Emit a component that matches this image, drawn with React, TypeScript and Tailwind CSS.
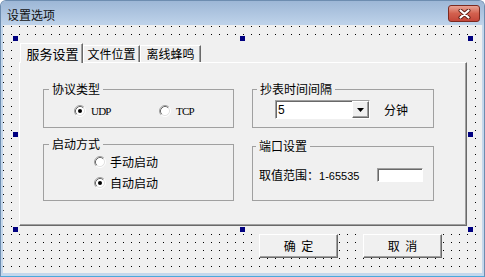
import type { ReactNode } from "react";

const Radio = ({ checked }: { checked?: boolean }) => (
  <svg width="12" height="12" viewBox="0 0 12 12" className="shrink-0">
    <circle cx="6" cy="6" r="4.5" fill="#fff" />
    <path d="M2.11 9.89A5.5 5.5 0 0 1 9.89 2.11" fill="none" stroke="#a0a0a0" />
    <path d="M9.89 2.11A5.5 5.5 0 0 1 2.11 9.89" fill="none" stroke="#fff" />
    <path d="M2.82 9.18A4.5 4.5 0 0 1 9.18 2.82" fill="none" stroke="#696969" />
    <path d="M9.18 2.82A4.5 4.5 0 0 1 2.82 9.18" fill="none" stroke="#e3e3e3" />
    {checked && <circle cx="6" cy="6" r="2" fill="#000" />}
  </svg>
);

const Frame = ({
  title,
  indent,
  className,
  children,
}: {
  title: string;
  indent: string;
  className: string;
  children: ReactNode;
}) => (
  <fieldset className={`border border-[#a0a0a0] p-0 ${className}`}>
    <legend className={`${indent} px-[3px] text-[12px] leading-[12px]`}>{title}</legend>
    {children}
  </fieldset>
);

const handles = [
  "left-[-5px] top-[-5px]",
  "left-[222px] top-[-5px]",
  "left-[450px] top-[-5px]",
  "left-[-5px] top-[91px]",
  "left-[450px] top-[91px]",
  "left-[-5px] top-[186px]",
  "left-[222px] top-[186px]",
  "left-[450px] top-[186px]",
];

const raised =
  "bg-[#f0f0f0] border border-t-white border-l-white border-r-[#696969] border-b-[#696969] shadow-[inset_-1px_-1px_0_#a0a0a0]";
const sunken =
  "bg-white border border-t-[#a0a0a0] border-l-[#a0a0a0] border-r-white border-b-white shadow-[inset_1px_1px_0_#696969]";

export default function App() {
  return (
    <div className="w-[485px] h-[277px] font-['Noto_Sans_CJK_SC',sans-serif] text-black select-none">
      <div className="flex h-full flex-col rounded-t-[6px] border border-[#6d8db0] border-b-[#4aa8dc] bg-[#c4d7ec] px-[2px] pb-[3px]">
        {/* title bar */}
        <div className="-mx-[2px] flex h-[24px] items-start justify-between rounded-t-[5px] bg-gradient-to-b from-[#9db7d6] to-[#bfd3ea] pl-[6px] pr-[4px]">
          <span className="mt-[8px] text-[12px] leading-[12px] text-[#111]">设置选项</span>
          <div className="mt-[4px] flex h-[17px] w-[32px] items-center justify-center rounded-[3px] border border-[#7c2a20] bg-gradient-to-b from-[#e8a395] via-[#d2604e] to-[#c4473a]">
            <svg width="13" height="10" viewBox="0 0 13 10">
              <path d="M2.5 1.5l8 7M10.5 1.5l-8 7" stroke="#5a1c14" strokeWidth="4" strokeLinecap="round" />
              <path d="M2.5 1.5l8 7M10.5 1.5l-8 7" stroke="#fff" strokeWidth="2.2" strokeLinecap="round" />
            </svg>
          </div>
        </div>

        {/* client area with design grid */}
        <div className="flex-1 bg-[#f0f0f0] bg-[conic-gradient(from_270deg_at_1px_1px,#000_25%,transparent_0)] bg-[length:8px_8px] bg-[position:0_1px] pl-[15px] pt-[16px]">
          <div className="relative h-[186px] w-[450px] bg-[#f0f0f0]">
            {/* tabs */}
            <div className="flex h-[21px] items-end pl-[2px]">
              <div className="relative z-10 -mb-px flex h-[20px] w-[63px] items-center justify-center border-l border-t border-r border-white border-r-[#696969] bg-[#f0f0f0] pl-[2px] text-[13px] leading-[13px] shadow-[inset_-1px_0_0_#a0a0a0]">
                服务设置
              </div>
              <div className="flex h-[17px] w-[57px] items-center justify-center border-l border-t border-r border-white border-r-[#696969] text-[12px] leading-[12px] shadow-[inset_-1px_0_0_#a0a0a0]">
                文件位置
              </div>
              <div className="flex h-[17px] w-[61px] items-center justify-center border-l border-t border-r border-white border-r-[#696969] text-[12px] leading-[12px] shadow-[inset_-1px_0_0_#a0a0a0]">
                离线蜂鸣
              </div>
            </div>

            {/* tab page */}
            <div className="ml-[1px] h-[164px] w-[448px] border border-t-white border-l-white border-r-[#696969] border-b-[#696969] pl-[23px] pt-[20px] shadow-[inset_-1px_-1px_0_#a0a0a0]">
              <div className="grid grid-cols-[191px_182px] gap-x-[18px] gap-y-[10px]">
                <Frame title="协议类型" indent="ml-[5px]" className="h-[45px]">
                  <div className="mt-[10px] flex h-[12px] items-center pl-[30px] font-['Liberation_Serif',serif] text-[11px] leading-[12px] tracking-[-0.8px]">
                    <div className="flex w-[85px] items-center gap-[5px]">
                      <Radio checked />
                      <span>UDP</span>
                    </div>
                    <div className="flex items-center gap-[5px]">
                      <Radio />
                      <span>TCP</span>
                    </div>
                  </div>
                </Frame>

                <Frame title="抄表时间间隔" indent="ml-[4px]" className="h-[45px]">
                  <div className="ml-[22px] mt-[5px] flex items-center">
                    <div className={`flex h-[19px] w-[95px] items-stretch ${sunken}`}>
                      <span className="flex-1 pl-[2px] pt-[1px] font-['Liberation_Sans',sans-serif] text-[12px] leading-[16px]">
                        5
                      </span>
                      <div className={`flex w-[17px] items-center justify-center ${raised}`}>
                        <svg width="7" height="4" viewBox="0 0 7 4">
                          <path d="M0 0h7L3.5 4z" fill="#000" />
                        </svg>
                      </div>
                    </div>
                    <span className="ml-[14px] text-[12px] leading-[12px]">分钟</span>
                  </div>
                </Frame>

                <Frame title="启动方式" indent="ml-[5px]" className="h-[63px]">
                  <div className="pl-[50px] text-[12px] leading-[12px]">
                    <div className="mt-[6px] flex h-[12px] items-center gap-[4px]">
                      <Radio />
                      <span>手动启动</span>
                    </div>
                    <div className="mt-[9px] flex h-[12px] items-center gap-[4px]">
                      <Radio checked />
                      <span>自动启动</span>
                    </div>
                  </div>
                </Frame>

                <Frame title="端口设置" indent="ml-[3px]" className="mt-[2px] h-[61px]">
                  <div className="mt-[16px] flex h-[14px] items-center pl-[6px] text-[12px] leading-[12px]">
                    <span className="w-[118px]">
                      取值范围：<span className="font-['Liberation_Sans',sans-serif] text-[11px]">1-65535</span>
                    </span>
                    <div className={`h-[14px] w-[46px] ${sunken}`} />
                  </div>
                </Frame>
              </div>
            </div>

            {handles.map((h) => (
              <div key={h} className={`absolute h-[5px] w-[5px] bg-[#000080] ${h}`} />
            ))}
          </div>

          {/* buttons */}
          <div className="mt-[7px] flex gap-[25px] pl-[241px]">
            <button className={`flex h-[24px] w-[79px] items-center justify-center whitespace-pre text-[12px] leading-[12px] [word-spacing:3px] ${raised}`}>
              确 定
            </button>
            <button className={`flex h-[24px] w-[79px] items-center justify-center whitespace-pre text-[12px] leading-[12px] [word-spacing:3px] ${raised}`}>
              取 消
            </button>
          </div>
        </div>
      </div>
    </div>
  );
}
